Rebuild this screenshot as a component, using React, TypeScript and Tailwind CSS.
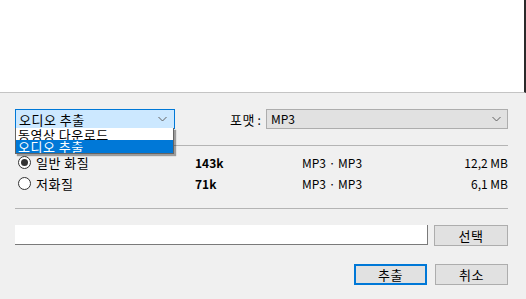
import React from 'react';

const font = { fontFamily: '"Noto Sans CJK KR", "Noto Sans", sans-serif' };

// Hangul in the reference is set a little wider than the Latin text
function Ko({ children }: { children: React.ReactNode }) {
  return <span className="text-[13px] leading-none tracking-[0.5px]">{children}</span>;
}

function Chevron() {
  return (
    <svg className="h-[6px] w-[9px]" viewBox="0 0 9 6" fill="none" stroke="#606060" strokeWidth="1">
      <path d="M0.5 1 L4.5 5 L8.5 1" />
    </svg>
  );
}

function Radio({ checked }: { checked?: boolean }) {
  return (
    <span className="flex h-[13px] w-[13px] items-center justify-center rounded-full border border-[#333] bg-white">
      {checked && <span className="h-[7px] w-[7px] rounded-full bg-[#333]" />}
    </span>
  );
}

const rows = [
  { label: '일반 화질', rate: '143k', fmt: 'MP3 · MP3', size: '12,2 MB', checked: true },
  { label: '저화질', rate: '71k', fmt: 'MP3 · MP3', size: '6,1 MB', checked: false },
];

export default function App() {
  return (
    <div className="relative h-[299px] w-[526px] overflow-hidden bg-[#f0f0f0] text-[12px] leading-none text-black" style={font}>
      {/* preview area */}
      <div className="h-[93px] border-r-2 border-b border-r-[#2b2b2b] border-b-[#c4c4c4] bg-white" />

      <div className="pl-[15px] pr-[18px] pt-[16px]">
        {/* mode + format */}
        <div className="relative flex h-[20px] items-center">
          <div className="flex h-[20px] w-[160px] items-center justify-between border border-[#0078d7] bg-[#cce8ff] pl-[3px] pr-[7px]">
            <Ko>오디오 추출</Ko>
            <Chevron />
          </div>
          <span className="ml-[55px] whitespace-nowrap">
            <Ko>포맷</Ko> :
          </span>
          <div className="ml-auto flex h-[20px] w-[242px] items-center justify-between border border-[#adadad] bg-[#e1e1e1] pl-[4px] pr-[6px]">
            <span>MP3</span>
            <Chevron />
          </div>

          {/* open list */}
          <div className="absolute left-0 top-[19px] z-10 w-[159px] overflow-hidden border border-t-0 border-[#646464] bg-white shadow-[2px_2px_1px_rgba(0,0,0,0.35)]">
            <div className="flex h-[12px] items-center overflow-hidden pl-[2px]">
              <Ko>동영상 다운로드</Ko>
            </div>
            <div className="flex h-[13px] items-center overflow-hidden bg-[#0078d7] pl-[2px] text-white">
              <Ko>오디오 추출</Ko>
            </div>
          </div>
        </div>

        <div className="mt-[16px] h-px bg-[#b4b4b4]" />

        {/* quality rows */}
        <div className="mt-[6px] flex flex-col">
          {rows.map((r) => (
            <div key={r.label} className="grid h-[21px] grid-cols-[180px_107px_1fr_auto] items-center">
              <div className="flex items-center gap-[5px] pl-[3px]">
                <Radio checked={r.checked} />
                <Ko>{r.label}</Ko>
              </div>
              <span className="font-bold">{r.rate}</span>
              <span>{r.fmt}</span>
              <span className="text-right">{r.size}</span>
            </div>
          ))}
        </div>

        <div className="mt-[14px] h-px bg-[#b4b4b4]" />

        {/* output path */}
        <div className="mt-[16px] flex items-start gap-[6px]">
          <div className="h-[20px] w-[413px] border-r border-b border-[#7a7a7a] bg-white" />
          <button className="flex h-[21px] flex-1 items-center justify-center border border-[#adadad] bg-[#e1e1e1]">
            <Ko>선택</Ko>
          </button>
        </div>

        {/* actions */}
        <div className="mt-[18px] flex justify-end gap-[8px]">
          <button className="flex h-[21px] w-[73px] items-center justify-center border-2 border-[#0078d7] bg-[#e1e1e1]">
            <Ko>추출</Ko>
          </button>
          <button className="flex h-[21px] w-[73px] items-center justify-center border border-[#adadad] bg-[#e1e1e1]">
            <Ko>취소</Ko>
          </button>
        </div>
      </div>
    </div>
  );
}
